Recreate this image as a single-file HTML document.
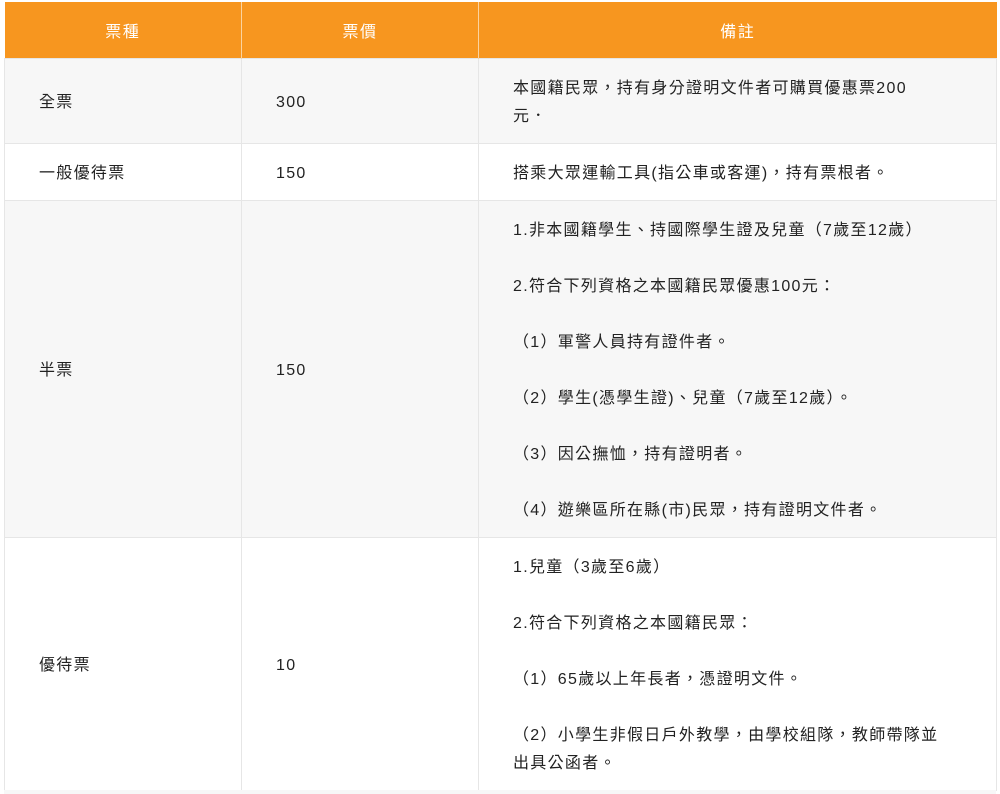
<!DOCTYPE html>
<html><head><meta charset="utf-8"><style>
body{margin:0;background:#fff;font-family:"Liberation Sans","Noto Sans CJK TC",sans-serif;}
table{position:absolute;left:4px;top:2px;border-collapse:collapse;width:992px;table-layout:fixed;}
th{background:#f7961f;color:#fff;font-weight:normal;font-size:16px;letter-spacing:1.5px;height:56px;border-left:1px solid #fbd3a0;padding:0;}
th:first-child{border-left:none}
td{font-size:16px;letter-spacing:1.3px;color:#222;border:1px solid #e6e6e6;padding:16px 0 12px 34px;line-height:28px;white-space:nowrap;vertical-align:middle;}
td:first-child{padding-left:34px}
tr.g td{background:#f7f7f7}
p{margin:0 0 28px}
p:last-child{margin:0}
.after{position:absolute;left:4px;top:790px;width:992px;height:4px;background:#f7f7f7}
</style></head><body>
<table>
<colgroup><col style="width:237px"><col style="width:237px"><col style="width:518px"></colgroup>
<tr><th>票種</th><th>票價</th><th>備註</th></tr>
<tr class="g"><td>全票</td><td>300</td><td>本國籍民眾，持有身分證明文件者可購買優惠票200<br>元．</td></tr>
<tr><td>一般優待票</td><td>150</td><td>搭乘大眾運輸工具(指公車或客運)，持有票根者。</td></tr>
<tr class="g"><td>半票</td><td>150</td><td>
<p>1.非本國籍學生、持國際學生證及兒童（7歲至12歲）</p>
<p>2.符合下列資格之本國籍民眾優惠100元：</p>
<p>（1）軍警人員持有證件者。</p>
<p>（2）學生(憑學生證)、兒童（7歲至12歲）。</p>
<p>（3）因公撫恤，持有證明者。</p>
<p>（4）遊樂區所在縣(市)民眾，持有證明文件者。</p></td></tr>
<tr><td>優待票</td><td>10</td><td>
<p>1.兒童（3歲至6歲）</p>
<p>2.符合下列資格之本國籍民眾：</p>
<p>（1）65歲以上年長者，憑證明文件。</p>
<p>（2）小學生非假日戶外教學，由學校組隊，教師帶隊並<br>出具公函者。</p></td></tr>
</table>
<div class="after"></div>
</body></html>
